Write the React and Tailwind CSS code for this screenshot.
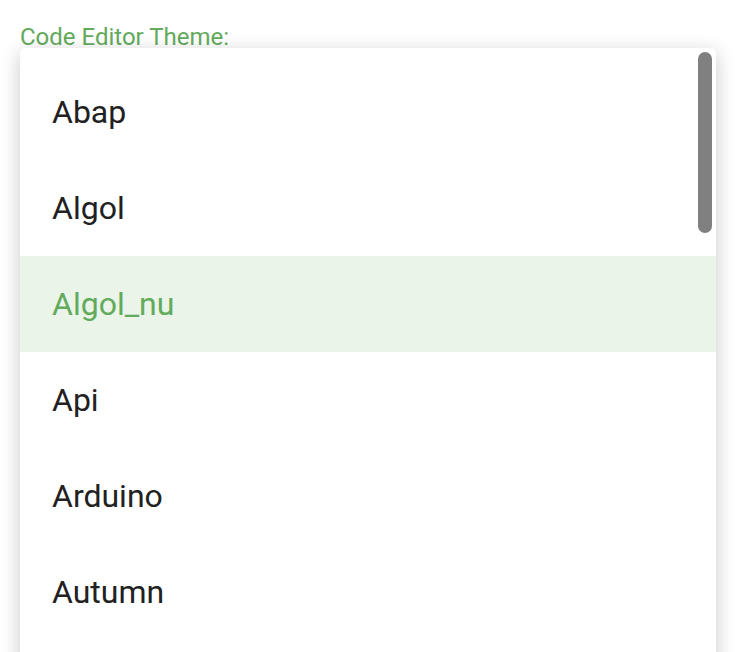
import { useState } from 'react';

const themes = ["Abap", "Algol", "Algol_nu", "Api", "Arduino", "Autumn"];

export default function App() {
    const [selected, setSelected] = useState("Algol_nu");

    return (
        <div className="h-[652px] overflow-hidden bg-white px-5 pt-[26px]" style={{ fontFamily: "Roboto, 'Noto Sans', sans-serif" }}>
            <div className="text-[24px] leading-[22px] text-[#63ab5c]">Code Editor Theme:</div>

            {/* Dropdown menu */}
            <div className="relative h-[700px] overflow-hidden rounded-t-[5px] bg-white py-4 shadow-[0_5px_20px_rgba(0,0,0,0.22)]">
                <ul>
                    {themes.map((name) => (
                        <li
                            key={name}
                            onClick={() => setSelected(name)}
                            className={
                                name === selected
                                    ? "flex h-24 items-center bg-[#eaf4e9] px-8 text-[32px] text-[#63ab5c]"
                                    : "flex h-24 items-center px-8 text-[32px] text-[#212121]"
                            }
                        >
                            {name}
                        </li>
                    ))}
                </ul>
                <div className="absolute right-1 top-1 h-[181px] w-[14px] rounded-full bg-[#808080]" />
            </div>
        </div>
    );
}
